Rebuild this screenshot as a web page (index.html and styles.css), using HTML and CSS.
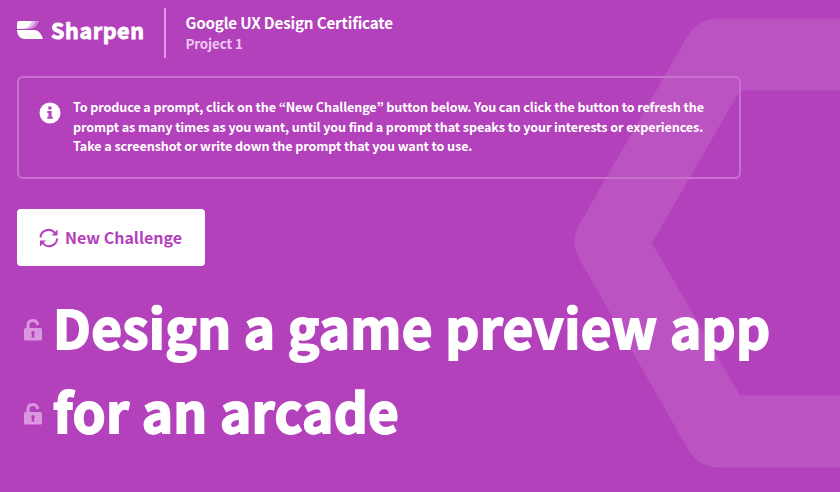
FILE: index.html
```html
<!DOCTYPE html>
<html lang="en">
<head>
<meta charset="utf-8">
<title>Sharpen</title>
<link rel="stylesheet" href="styles.css">
</head>
<body>
<svg class="backdrop" viewBox="0 0 840 492" aria-hidden="true"><path fill-rule="evenodd" d="M840 18.500H718C705 18.500 694 25 687.500 36L578.500 226Q570.500 243 578.500 257.500L687.500 448.500C694 460 705 467.500 718 467.500H840V395.500H740L652 243L740 90.500H840Z"/></svg>
<header class="header">
  <div class="brand">
    <svg class="mark" viewBox="0 0 26 18" aria-hidden="true"><path class="tint" d="M14 0H22C20 5 17 8 11 8H8Z"/><path class="mid" d="M11 0H18.500C17 5 13 8 7 8H5Z"/><path d="M2 0H15C13 5 10 8 4 8H0V2Q0 0 2 0Z"/><path d="M0 9H17C21 9 24 12 26 18H8C3 18 0 14 0 9Z"/></svg>
    <span class="wordmark">Sharpen</span>
  </div>
  <div class="course">
    <div class="title">Google UX Design Certificate</div>
    <div class="project">Project 1</div>
  </div>
</header>
<main>
  <section class="notice">
    <svg class="info" viewBox="0 0 22 22" aria-hidden="true"><circle cx="11" cy="11" r="10.500"/><path d="M9.300 4.600h3.200v2.800H9.300ZM8.300 9h4.300v5.700h1.200v2H8.300v-2h1.200V11H8.300Z"/></svg>
    <p class="copy">To produce a prompt, click on the “New Challenge” button below. You can click the button to refresh the<br>prompt as many times as you want, until you find a prompt that speaks to your interests or experiences.<br>Take a screenshot or write down the prompt that you want to use.</p>
  </section>
  <button class="challenge">
    <svg class="refresh" viewBox="0 0 20 20" aria-hidden="true"><path class="arc" d="M1.500 9.500A8 8 0 0 1 15.800 5M18.100 10.500A8 8 0 0 1 3.800 15"/><path d="M18.500 1.500V7.500H12.500ZM1 18.500V12.500H7Z"/></svg>
    <span>New Challenge</span>
  </button>
  <div class="prompt">
    <div class="row"><svg class="lock" viewBox="0 0 18 22" aria-hidden="true"><path class="shackle" d="M4 10V6Q4 1.500 8.800 1.500Q13 1.500 13.800 6"/><path fill-rule="evenodd" d="M1.500 9H16.500Q18 9 18 10.500V20Q18 21.500 16.500 21.500H1.500Q0 21.500 0 20V10.500Q0 9 1.500 9ZM9 12A2 2 0 0 0 8 15.600L7.500 18.500H10.500L10 15.600A2 2 0 0 0 9 12Z"/></svg><span class="words">Design a game preview app</span></div>
    <div class="row"><svg class="lock" viewBox="0 0 18 22" aria-hidden="true"><path class="shackle" d="M4 10V6Q4 1.500 8.800 1.500Q13 1.500 13.800 6"/><path fill-rule="evenodd" d="M1.500 9H16.500Q18 9 18 10.500V20Q18 21.500 16.500 21.500H1.500Q0 21.500 0 20V10.500Q0 9 1.500 9ZM9 12A2 2 0 0 0 8 15.600L7.500 18.500H10.500L10 15.600A2 2 0 0 0 9 12Z"/></svg><span class="words">for an arcade</span></div>
  </div>
</main>
</body>
</html>
```
FILE: styles.css
```css
* { box-sizing: border-box; }
body {
  margin: 0;
  height: 492px;
  padding: 8px 17px 0;
  overflow: hidden;
  background: #b341bb;
  color: #fff;
  font-family: "Noto Sans CJK JP", sans-serif;
  font-weight: 700;
  white-space: nowrap;
}
svg { display: block; flex: none; fill: currentColor; }
.backdrop { position: absolute; inset: 0; width: 840px; height: 492px; z-index: -1; fill: #bc53c3; }
.header { display: flex; height: 50px; }
.brand { display: flex; width: 149px; border-right: 2px solid #e29be7; }
.mark { width: 26px; height: 18px; margin-top: 13px; }
.tint { fill: #d08ad6; }
.mid { fill: #e6bce9; }
.wordmark { margin-left: 8px; font-size: 21.500px; letter-spacing: 0.600px; line-height: 44px; -webkit-text-stroke: 0.900px currentColor; }
.course { margin-left: 19.500px; padding-top: 3px; }
.title { font-size: 15.200px; line-height: 22px; letter-spacing: -0.180px; }
.project { font-size: 13.400px; line-height: 20px; letter-spacing: -0.130px; color: #f0c9f3; }
.notice {
  display: flex;
  width: 724px;
  height: 103px;
  margin-top: 18px;
  padding: 19px 20px;
  border: 2px solid #c970d0;
  border-radius: 6px;
}
.info { width: 22px; height: 22px; margin-top: 5px; }
.info path { fill: #b341bb; }
.copy { margin: 0 0 0 12px; font-size: 12.600px; line-height: 19.600px; letter-spacing: -0.100px; }
.challenge {
  display: flex;
  align-items: center;
  width: 188px;
  height: 57px;
  margin-top: 30px;
  padding: 0 0 2px 22px;
  border: 0;
  border-radius: 4px;
  background: #fff;
  color: #b341bb;
  font: inherit;
  font-size: 16px;
}
.refresh { width: 20px; height: 20px; margin: 2px 6px 0 0; }
.arc { fill: none; stroke: currentColor; stroke-width: 2; }
.prompt { margin-top: 18px; }
.row { display: flex; align-items: center; height: 84px; font-size: 53px; line-height: 84px; letter-spacing: 0.320px; }
.words { -webkit-text-stroke: 1.800px currentColor; }
.lock { width: 18px; height: 22px; margin: 8px 11px 0 7px; color: #da96df; }
.shackle { fill: none; stroke: currentColor; stroke-width: 3; }
```
